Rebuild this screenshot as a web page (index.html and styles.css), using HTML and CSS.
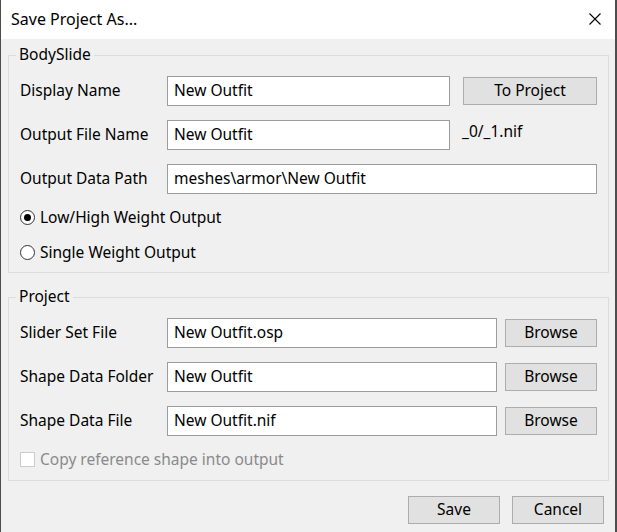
FILE: index.html
```html
<!DOCTYPE html>
<html>
<head>
<meta charset="utf-8">
<title>Save Project As...</title>
<link rel="stylesheet" href="styles.css">
</head>
<body>
<div class="window">
  <div class="titlebar">
    <span class="title">Save Project As...</span>
    <svg class="close" width="12" height="12" viewBox="0 0 12 12"><path d="M0.5 0.5 L11.5 11.5 M11.5 0.5 L0.5 11.5" stroke="#000" stroke-width="1.1" fill="none"/></svg>
  </div>
  <div class="content">
    <div class="group">
      <span class="legend">BodySlide</span>
      <div class="grid grid-bs">
        <label class="lbl">Display Name</label>
        <input class="field" type="text" value="New Outfit">
        <button class="btn btn-wide">To Project</button>

        <label class="lbl">Output File Name</label>
        <input class="field" type="text" value="New Outfit">
        <span class="suffix">_0/_1.nif</span>

        <label class="lbl">Output Data Path</label>
        <input class="field span2" type="text" value="meshes\armor\New Outfit">
      </div>
      <div class="options">
        <label class="opt"><input class="radio" type="radio" name="w" checked><span>Low/High Weight Output</span></label>
        <label class="opt"><input class="radio" type="radio" name="w"><span>Single Weight Output</span></label>
      </div>
    </div>

    <div class="group group-project">
      <span class="legend">Project</span>
      <div class="grid grid-pr">
        <label class="lbl">Slider Set File</label>
        <input class="field" type="text" value="New Outfit.osp">
        <button class="btn btn-browse">Browse</button>

        <label class="lbl">Shape Data Folder</label>
        <input class="field" type="text" value="New Outfit">
        <button class="btn btn-browse">Browse</button>

        <label class="lbl">Shape Data File</label>
        <input class="field" type="text" value="New Outfit.nif">
        <button class="btn btn-browse">Browse</button>
      </div>
      <div class="options">
        <label class="opt disabled"><input class="check" type="checkbox" disabled><span>Copy reference shape into output</span></label>
      </div>
    </div>

    <div class="actions">
      <button class="btn btn-action">Save</button>
      <button class="btn btn-action">Cancel</button>
    </div>
  </div>
</div>
</body>
</html>
```
FILE: styles.css
```css
* { box-sizing: border-box; }
html, body {
  margin: 0;
  padding: 0;
  background: #4d4d4d;
  height: 100%;
}
body {
  font-family: "Noto Sans", "Open Sans", sans-serif;
  font-size: 15.5px;
  color: #000;
}
.window {
  margin-left: 1px;
  width: 614px;
  height: 532px;
  background: #f0f0f0;
  display: flex;
  flex-direction: column;
}
.titlebar {
  height: 39px;
  background: #fff;
  display: flex;
  align-items: center;
  justify-content: space-between;
  padding: 0 14px 0 10px;
}
.title {
  font-size: 16px;
  line-height: 20px;
  margin-top: -2px;
}
.close { display: block; margin-top: -1px; }
.content {
  padding: 16px 6px 0 7px;
  display: flex;
  flex-direction: column;
}
.group {
  position: relative;
  border: 1px solid #dcdcdc;
  padding: 20px 10px 8px 11px;
}
.group-project {
  margin-top: 24px;
  padding-bottom: 9px;
}
.legend {
  position: absolute;
  left: 7px;
  top: -12px;
  padding: 0 3px;
  line-height: 20px;
  background: #f0f0f0;
}
.grid {
  display: grid;
  grid-auto-rows: 30px;
  row-gap: 14px;
  align-items: center;
}
.grid-bs { grid-template-columns: 147px 283px 147px; }
.grid-pr { grid-template-columns: 147px 330px 100px; }
.lbl { line-height: 20px; padding-bottom: 2px; }
.field {
  height: 30px;
  border: 1px solid #9c9c9c;
  background: #fff;
  font: inherit;
  color: #000;
  padding: 0 6px 2px;
  margin: 0;
  outline: none;
  width: 100%;
}
.span2 { grid-column: 2 / 4; }
.btn {
  height: 28px;
  border: 1px solid #adadad;
  background: #e1e1e1;
  font: inherit;
  color: #000;
  padding: 0 0 2px;
  margin: 0;
}
.btn-wide { width: 134px; justify-self: end; }
.btn-browse { width: 92px; justify-self: end; }
.suffix {
  padding-left: 12px;
  line-height: 20px;
  align-self: start;
  margin-top: 1px;
}
.options {
  display: flex;
  flex-direction: column;
  gap: 11px;
  margin-top: 11px;
}
.opt {
  height: 24px;
  display: flex;
  align-items: center;
  gap: 5px;
}
.opt span { padding-bottom: 1px; }
.radio {
  appearance: none;
  -webkit-appearance: none;
  width: 15px;
  height: 15px;
  margin: 0;
  border: 1px solid #333;
  border-radius: 50%;
  background: #fff;
  position: relative;
  flex: none;
}
.radio:checked::after {
  content: "";
  position: absolute;
  left: 3px;
  top: 3px;
  width: 7px;
  height: 7px;
  border-radius: 50%;
  background: #000;
}
.check {
  appearance: none;
  -webkit-appearance: none;
  width: 15px;
  height: 15px;
  margin: 0;
  border: 1px solid #cccccc;
  background: #fff;
  flex: none;
}
.disabled { color: #8a8a8a; }
.actions {
  display: flex;
  justify-content: flex-end;
  gap: 12px;
  margin-top: 15px;
  padding-right: 5px;
}
.btn-action { width: 92px; height: 28px; }
```
